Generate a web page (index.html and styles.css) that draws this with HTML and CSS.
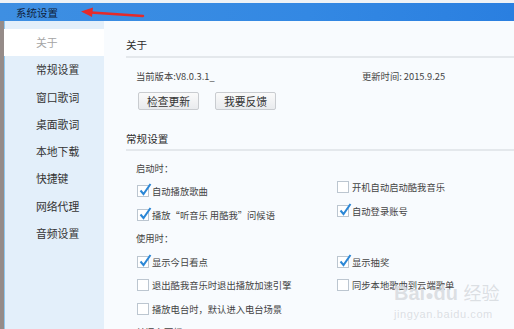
FILE: index.html
```html
<!DOCTYPE html>
<html lang="zh-CN">
<head>
  <meta charset="utf-8">
  <title>系统设置</title>
  <link rel="stylesheet" href="styles.css">
</head>
<body>
  <div class="topstrip"></div>
  <div class="titlebar">
    <span class="title">系统设置</span>
    <svg class="arrow" width="64" height="12" viewBox="0 0 64 12">
      <path d="M62 9 L10 5.5" stroke="#e52a2a" stroke-width="2.4" fill="none" stroke-linecap="round"/>
      <path d="M0 4.5 L12 0.5 L11 10 Z" fill="#e52a2a"/>
    </svg>
  </div>
  <div class="main">
    <div class="sidebar">
      <div class="navitem active">关于</div>
      <div class="navitem">常规设置</div>
      <div class="navitem">窗口歌词</div>
      <div class="navitem">桌面歌词</div>
      <div class="navitem">本地下载</div>
      <div class="navitem">快捷键</div>
      <div class="navitem">网络代理</div>
      <div class="navitem">音频设置</div>
    </div>
    <div class="content">
      <div class="heading">关于</div>
      <div class="section">
        <div class="version">
          <span class="ver">当前版本:V8.0.3.1_</span>
          <span class="date">更新时间: 2015.9.25</span>
        </div>
        <div class="buttons">
          <button class="btn">检查更新</button>
          <button class="btn">我要反馈</button>
        </div>
      </div>
      <div class="heading second">常规设置</div>
      <div class="section options">
        <div class="row"><span class="label">启动时：</span></div>
        <div class="row">
          <label class="opt"><span class="box checked"><svg width="14" height="14" viewBox="0 0 14 14"><path d="M2.5 7.5 L5.5 11 L12.5 1" stroke="#2b87d6" stroke-width="2" fill="none"/></svg></span>自动播放歌曲</label>
          <label class="opt right up"><span class="box"></span>开机自动启动酷我音乐</label>
        </div>
        <div class="row">
          <label class="opt"><span class="box checked"><svg width="14" height="14" viewBox="0 0 14 14"><path d="M2.5 7.5 L5.5 11 L12.5 1" stroke="#2b87d6" stroke-width="2" fill="none"/></svg></span>播放“听音乐 用酷我”问候语</label>
          <label class="opt right up"><span class="box checked"><svg width="14" height="14" viewBox="0 0 14 14"><path d="M2.5 7.5 L5.5 11 L12.5 1" stroke="#2b87d6" stroke-width="2" fill="none"/></svg></span>自动登录账号</label>
        </div>
        <div class="row"><span class="label">使用时：</span></div>
        <div class="row">
          <label class="opt"><span class="box checked"><svg width="14" height="14" viewBox="0 0 14 14"><path d="M2.5 7.5 L5.5 11 L12.5 1" stroke="#2b87d6" stroke-width="2" fill="none"/></svg></span>显示今日看点</label>
          <label class="opt right"><span class="box checked"><svg width="14" height="14" viewBox="0 0 14 14"><path d="M2.5 7.5 L5.5 11 L12.5 1" stroke="#2b87d6" stroke-width="2" fill="none"/></svg></span>显示抽奖</label>
        </div>
        <div class="row">
          <label class="opt"><span class="box"></span>退出酷我音乐时退出播放加速引擎</label>
          <label class="opt right"><span class="box"></span>同步本地歌曲到云端歌单</label>
        </div>
        <div class="row">
          <label class="opt"><span class="box"></span>播放电台时，默认进入电台场景</label>
        </div>
        <div class="row"><span class="label">关闭主面板：</span></div>
      </div>
      <div class="watermark">
        <div class="wm-logo">Bai<span class="paw">&#9679;</span>du <span class="wm-cn">经验</span></div>
        <div class="wm-url">jingyan.baidu.com</div>
      </div>
    </div>
  </div>
</body>
</html>
```

FILE: styles.css
```css
html, body {
  margin: 0;
  height: 100%;
  overflow: hidden;
}
body {
  background: #f7fafd;
  font-family: "Noto Sans CJK SC", "DejaVu Sans", sans-serif;
  color: #3a3a3a;
}
.topstrip {
  height: 3px;
  background: #eef2f6;
}
.titlebar {
  position: relative;
  height: 18px;
  background: linear-gradient(to right, #3e8fe2, #3388e3 60%, #2a7fe0);
  display: flex;
  align-items: center;
  padding-left: 16px;
}
.title {
  font-size: 10.5px;
  color: #10223a;
}
.arrow {
  position: absolute;
  left: 81px;
  top: 4px;
}
.main {
  display: flex;
  height: 308px;
}
.sidebar {
  width: 100px;
  flex: none;
  background: #e3effa;
  border-left: 4px solid #958b88;
  box-shadow: inset 1px 0 0 #8fc7ee;
  padding-top: 8px;
}
.navitem {
  height: 27.3px;
  line-height: 27.3px;
  padding-left: 32px;
  font-size: 10.8px;
  color: #333;
}
.navitem.active {
  background: #ffffff;
  color: #a4a4a4;
}
.content {
  position: relative;
  flex: 1;
  padding: 13px 0 0 22px;
  background: #f8fbfe;
}
.heading {
  height: 22px;
  line-height: 22px;
  font-size: 10.6px;
  color: #2c2c2c;
  border-bottom: 2px solid #e4e8ec;
}
.heading.second {
  height: 20px;
  line-height: 20px;
  margin-top: 19px;
}
.section {
  padding-left: 10px;
}
.version {
  display: flex;
  margin-top: 8px;
  height: 20px;
  align-items: center;
  font-size: 9.3px;
  color: #444;
}
.ver {
  width: 226px;
}
.buttons {
  display: flex;
  gap: 16px;
  margin-top: 6px;
  padding-left: 2px;
}
.btn {
  width: 61px;
  height: 18px;
  padding: 0;
  border: 1px solid #c9ccd0;
  border-radius: 2px;
  background: linear-gradient(#fafafa, #e9ebee);
  font-family: "Noto Sans CJK SC", sans-serif;
  font-size: 10.8px;
  color: #333;
}
.options {
  margin-top: 5px;
}
.row {
  display: flex;
  align-items: center;
  height: 23.5px;
  font-size: 9.3px;
  color: #444;
}
.opt {
  display: flex;
  align-items: center;
  width: 199px;
  padding-left: 1px;
}
.opt.right {
  width: auto;
}
.opt.up {
  margin-bottom: 8px;
}
.box {
  position: relative;
  width: 10px;
  height: 10px;
  border: 1px solid #bcc6d0;
  background: #fff;
  margin-right: 3px;
  flex: none;
}
.box svg {
  position: absolute;
  left: 0;
  top: -3px;
}
.watermark {
  position: absolute;
  left: 290px;
  top: 260px;
  color: rgba(190, 196, 204, 0.55);
  text-shadow: 0 0 1px rgba(255, 255, 255, 0.9);
  font-family: "Liberation Sans", sans-serif;
}
.wm-logo {
  font-size: 20px;
  font-weight: bold;
  line-height: 22px;
}
.paw {
  font-size: 14px;
}
.wm-cn {
  font-family: "Noto Sans CJK SC", sans-serif;
  font-weight: normal;
  font-size: 18px;
}
.wm-url {
  font-size: 11px;
  letter-spacing: 0.6px;
  margin-top: 2px;
}
```
